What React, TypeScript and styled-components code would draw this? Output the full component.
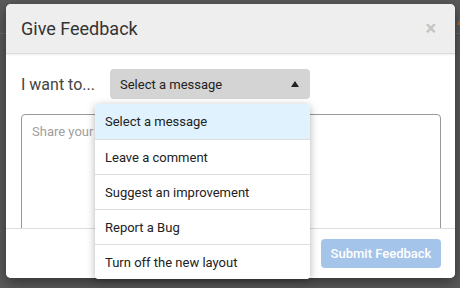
import React from "react";
import styled, { createGlobalStyle } from "styled-components";

const Global = createGlobalStyle`
  html, body { margin: 0; padding: 0; }
  body {
    background: #5a5a5a;
    font-family: Roboto, "Liberation Sans", sans-serif;
    width: 460px;
    height: 288px;
    overflow: hidden;
  }
`;

const Stage = styled.div`
  position: relative;
  width: 460px;
  height: 288px;
  padding: 4px 0 0 6px;
  box-sizing: border-box;
  background: #5a5a5a;
  overflow: hidden;
`;

const PageLine = styled.div`
  position: absolute;
  left: 0;
  right: 0;
  top: 33px;
  height: 1px;
  background: #6a6a6a;
`;

const PageMark = styled.div`
  position: absolute;
  right: 0;
  top: 19px;
  width: 0;
  height: 0;
  border-left: 3px solid transparent;
  border-bottom: 6px solid #b5651d;
`;

const Modal = styled.div`
  position: relative;
  width: 449px;
  height: 274px;
  background: #fff;
  border-radius: 5px;
  display: flex;
  flex-direction: column;
  box-shadow: 0 4px 14px rgba(0, 0, 0, 0.45);
`;

const Header = styled.div`
  height: 49px;
  flex: none;
  display: flex;
  align-items: center;
  justify-content: space-between;
  padding: 0 19px 0 15px;
  background: #eeeeee;
  border-radius: 5px 5px 0 0;
  border-bottom: 1px solid #dcdcdc;
  box-shadow: 0 1px 2px rgba(0, 0, 0, 0.08);
  position: relative;
  z-index: 1;
`;

const Title = styled.h1`
  margin: 0;
  font-size: 18px;
  font-weight: 400;
  color: #333;
`;

const Close = styled.span`
  font-size: 20px;
  font-weight: 700;
  color: #c4c4c4;
  line-height: 1;
  margin-top: -2px;
`;

const Body = styled.div`
  flex: 1;
  min-height: 0;
  padding: 15px 14px 0 15px;
  display: flex;
  flex-direction: column;
  gap: 15px;
`;

const Row = styled.div`
  display: flex;
  align-items: center;
  gap: 15px;
`;

const Label = styled.span`
  font-size: 16px;
  color: #444;
  width: 74px;
`;

const SelectWrap = styled.div`
  position: relative;
`;

const SelectBox = styled.div`
  width: 200px;
  height: 30px;
  box-sizing: border-box;
  background: #d4d4d4;
  border-radius: 4px;
  display: flex;
  align-items: center;
  justify-content: space-between;
  padding: 0 10px;
  font-size: 13px;
  color: #222;
`;

const Caret = styled.span`
  width: 0;
  height: 0;
  border-left: 4.5px solid transparent;
  border-right: 4.5px solid transparent;
  border-bottom: 6px solid #222;
  margin-right: 1px;
`;

const Menu = styled.ul`
  position: absolute;
  left: -15px;
  top: 35px;
  width: 215px;
  margin: 0;
  padding: 0;
  list-style: none;
  background: #fff;
  border-radius: 4px;
  box-shadow: 0 2px 8px rgba(0, 0, 0, 0.3);
  overflow: hidden;
  z-index: 5;
`;

const Item = styled.li<{ $active?: boolean }>`
  height: 35px;
  box-sizing: border-box;
  display: flex;
  align-items: center;
  padding: 0 10px;
  font-size: 13px;
  color: #222;
  background: ${(p) => (p.$active ? "#e0f2fd" : "#fff")};
  border-top: 1px solid #dedede;
  &:first-child {
    border-top: none;
  }
`;

const TextArea = styled.div`
  flex: none;
  height: 140px;
  border: 1px solid #999;
  border-radius: 4px;
  padding: 9px 10px;
  box-sizing: border-box;
  font-size: 13px;
  color: #a0a0a0;
`;

const Footer = styled.div`
  height: 49px;
  flex: none;
  position: relative;
  z-index: 2;
  background: #fff;
  border-radius: 0 0 5px 5px;
  border-top: 1px solid #dddddd;
  display: flex;
  align-items: center;
  justify-content: flex-end;
  padding: 0 14px;
`;

const Submit = styled.button`
  width: 120px;
  height: 29px;
  border: none;
  border-radius: 4px;
  background: #a4c5e9;
  color: #fff;
  font-family: Roboto, "Liberation Sans", sans-serif;
  font-size: 13px;
  font-weight: 500;
  padding: 0;
`;

const options = [
  "Select a message",
  "Leave a comment",
  "Suggest an improvement",
  "Report a Bug",
  "Turn off the new layout",
];

export default function App() {
  return (
    <>
      <Global />
      <Stage>
        <PageLine />
        <PageMark />
        <Modal>
          <Header>
            <Title>Give Feedback</Title>
            <Close>×</Close>
          </Header>
          <Body>
            <Row>
              <Label>I want to...</Label>
              <SelectWrap>
                <SelectBox>
                  <span>Select a message</span>
                  <Caret />
                </SelectBox>
                <Menu>
                  {options.map((o, i) => (
                    <Item key={o} $active={i === 0}>
                      {o}
                    </Item>
                  ))}
                </Menu>
              </SelectWrap>
            </Row>
            <TextArea>Share your feedback here...</TextArea>
          </Body>
          <Footer>
            <Submit disabled>Submit Feedback</Submit>
          </Footer>
        </Modal>
      </Stage>
    </>
  );
}
